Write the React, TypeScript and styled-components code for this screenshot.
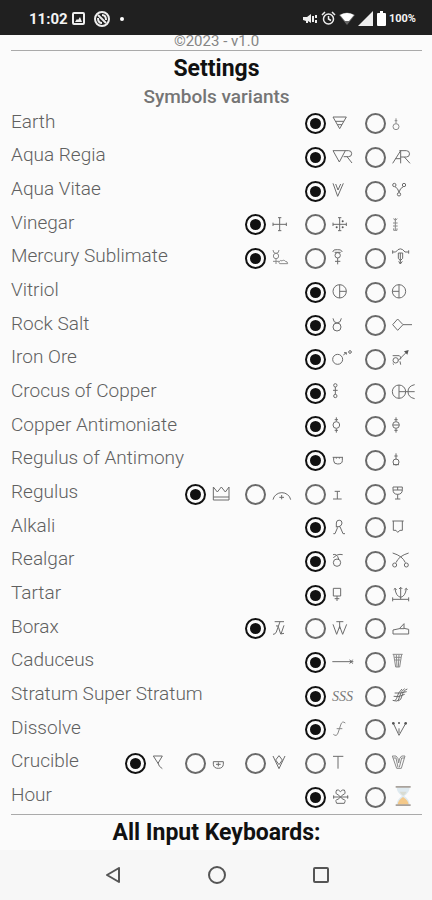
import React, { useState } from "react";
import styled, { createGlobalStyle, css } from "styled-components";

const GlobalStyle = createGlobalStyle`
  * { box-sizing: border-box; }
  body { margin: 0; background: #fbfbfb; font-family: Roboto, "Liberation Sans", sans-serif; }
  h1, h2, p { margin: 0; }
`;

const Screen = styled.div`
  display: flex;
  flex-direction: column;
  min-height: 100vh;
  background: #fbfbfb;
`;

const StatusBar = styled.header`
  display: flex;
  align-items: center;
  justify-content: space-between;
  height: 35px;
  padding: 2px 16px 0 29px;
  background: #202020;
  color: #f4f4f4;
`;

const StatusGroup = styled.div<{ $gap: number }>`
  display: flex;
  align-items: center;
  gap: ${(p) => p.$gap}px;
`;

const Clock = styled.span`
  font-size: 15px;
  font-weight: 700;
`;

const Battery = styled.span`
  font-size: 11px;
  font-weight: 700;
`;

const Content = styled.main`
  display: flex;
  flex: 1;
  flex-direction: column;
  padding: 0 10px 0 11px;
`;

const Version = styled.p`
  height: 15px;
  color: #858585;
  font-size: 15px;
  line-height: 12px;
  text-align: center;
`;

const Heading = styled.h1`
  border-top: 1px solid #aaa;
  color: #111;
  font-size: 23px;
  font-weight: 700;
  line-height: 35px;
  text-align: center;
`;

const Subheading = styled.h2`
  color: #757575;
  font-size: 19px;
  font-weight: 500;
  line-height: 21px;
  text-align: center;
`;

const Rows = styled.div`
  display: grid;
  flex: 1;
  grid-auto-rows: 1fr;
`;

const Row = styled.div`
  display: flex;
  align-items: center;
  justify-content: space-between;
`;

const RowName = styled.span`
  padding-bottom: 4px;
  color: #606060;
  font-size: 19px;
  font-weight: 300;
  line-height: 24px;
  white-space: nowrap;
`;

const Options = styled.div`
  display: flex;
  gap: 3px;
`;

const Option = styled.label`
  display: flex;
  align-items: center;
  gap: 6px;
  width: 57px;
  cursor: pointer;
`;

const Radio = styled.input`
  display: grid;
  flex: none;
  place-items: center;
  width: 21px;
  height: 21px;
  margin: 0;
  border: 2px solid #6a6a6a;
  border-radius: 50%;
  appearance: none;
  cursor: pointer;

  &:checked {
    border-color: #111;
  }

  &:checked::before {
    width: 11px;
    height: 11px;
    border-radius: 50%;
    background: #111;
    content: "";
  }
`;

const Glyph = styled.svg<{ $faint?: boolean }>`
  flex: none;
  width: 30px;
  height: 22px;
  overflow: visible;
  fill: none;
  stroke: #6c6c6c;
  stroke-width: 3;
  ${(p) =>
    p.$faint &&
    css`
      stroke: #8a8a8a;
    `}

  text {
    fill: #777;
    stroke: none;
    font: italic 42px "Liberation Serif", serif;
  }
`;

const NavBar = styled.nav`
  display: grid;
  grid-template-columns: repeat(3, 104px);
  justify-content: center;
  height: 50px;
  padding-left: 2px;
  background: #f7f7f7;
`;

const NavButton = styled.button`
  display: grid;
  place-items: center;
  padding: 0;
  border: 0;
  background: none;
  cursor: pointer;

  svg {
    fill: none;
    stroke: #555;
    stroke-width: 2;
  }
`;

type Symbol = { d?: string; dots?: number[][]; rings?: number[][]; faint?: boolean; extra?: React.ReactNode };
type Setting = { name: string; symbols: Symbol[] };

const hourglass = (
  <g stroke="none">
    <path d="M14 4H53Q53 19 37 30Q53 41 53 56H14Q14 41 30 30Q14 19 14 4Z" fill="#dfeaf0" />
    <path d="M23 17H44Q41 24 34 29Q26 24 23 17Z" fill="#d9dcd2" />
    <path d="M33 33Q49 43 50 56H17Q18 43 33 33Z" fill="#f4c98a" />
    <path d="M11 0H56V5H11ZM11 55H56V60H11Z" fill="#a9a29c" />
  </g>
);

const settings: Setting[] = [
  {
    name: "Earth",
    symbols: [
      { d: "M3 12H43L23 47ZM10 25H36M16 35H30" },
      { d: "M12 16V31M8 23H16", rings: [[12, 41, 9]], faint: true },
    ],
  },
  {
    name: "Aqua Regia",
    symbols: [
      { d: "M3 14H50A9 9 0 0 1 50 32H35M3 14L22 48L40 14M45 32L60 51" },
      { d: "M2 52L26 14V52M10 38H26M22 14H43A9 9 0 0 1 43 33H26M37 33L54 52" },
    ],
  },
  {
    name: "Aqua Vitae",
    symbols: [
      { d: "M3 10L17 49L34 10M11 12L18 30L26 12" },
      { d: "M9 20Q18 24 21 37Q24 24 34 20", rings: [[7, 15, 5], [36, 15, 5], [21, 43, 5]] },
    ],
  },
  {
    name: "Vinegar",
    symbols: [
      { d: "M3 31H43M23 11V50M3 26V36M43 26V36M18 11H28M18 50H28" },
      { d: "M3 31H43M23 11V50M3 26V36M43 26V36M18 11H28M18 50H28", dots: [[32, 22, 3], [32, 40, 3], [14, 40, 3]] },
      { d: "M10 12V48M4 14L10 19L16 14M3 27H17M3 36H17M5 43V49H15V43", faint: true },
    ],
  },
  {
    name: "Mercury Sublimate",
    symbols: [
      { d: "M3 9Q3 19 12 19Q21 19 21 9M12 35V51M3 43H21M23 50A5 5 0 0 1 30 42A6 6 0 0 1 40 43Q47 43 47 50Z", rings: [[12, 27, 8]], faint: true },
      { d: "M2 15Q4 6 16 8Q28 6 31 15M8 16H26M17 33V52M9 43H25", rings: [[17, 25, 8]] },
      { d: "M2 15H11Q25 -4 39 15H50M2 10V20M50 10V20M19 18H32V34L25 41L19 34ZM25 18V51M20 43L25 51L31 43" },
    ],
  },
  {
    name: "Vitriol",
    symbols: [
      { d: "M23 11V51M23 31H43", rings: [[23, 31, 20]] },
      { d: "M21 11V51M1 31H21", rings: [[21, 31, 20]] },
    ],
  },
  {
    name: "Rock Salt",
    symbols: [
      { d: "M3 10Q4 23 15 24Q27 23 28 10", rings: [[15, 36, 12]] },
      { d: "M2 29L17 12L33 29L17 46ZM33 29H60" },
    ],
  },
  {
    name: "Iron Ore",
    symbols: [
      { d: "M34 21L43 14M36 14H43V20", rings: [[17, 34, 15], [54, 12, 4]] },
      { d: "M18 38L44 12M2 23H22Q28 26 26 34M2 46L6 50M24 40L26 50", rings: [[11, 37, 8]], extra: <path d="M50 6L46 20L36 10Z" fill="#555" stroke="none" /> },
    ],
  },
  {
    name: "Crocus of Copper",
    symbols: [
      { d: "M10 15V37M3 25H17", rings: [[10, 10, 5], [10, 42, 5]] },
      { d: "M21 9V49M21 29H68M68 8Q48 12 48 29Q48 46 68 50", rings: [[21, 29, 20]] },
    ],
  },
  {
    name: "Copper Antimoniate",
    symbols: [
      { d: "M13 4V16M13 38V50M8 11H18M8 43H18", rings: [[13, 27, 10]] },
      { d: "M12 4V16M12 38V50M7 11H17M7 43H17M3 27H21", rings: [[12, 27, 10]] },
    ],
  },
  {
    name: "Regulus of Antimony",
    symbols: [
      { d: "M2 25H33M5 25V35Q5 45 17 45Q31 45 31 35V25M13 25V29M22 25V29" },
      { d: "M12 13V31M7 21H17M3 47H21", rings: [[12, 39, 9]] },
    ],
  },
  {
    name: "Regulus",
    symbols: [
      { d: "M4 12V51H51V12L40 27L28 12L16 27ZM4 42H51" },
      { d: "M3 50A27 26 0 0 1 56 50M29 36V49M22 43H36" },
      { d: "M8 25H24M16 25V48M3 48H29" },
      { d: "M3 12H31V20Q31 34 17 34Q3 34 3 20ZM17 34V48M9 48H25M3 21H31M17 12V21" },
    ],
  },
  {
    name: "Alkali",
    symbols: [
      { d: "M4 50H9L17 31M13 31V18A8 8 0 0 1 30 18Q30 26 21 29M13 29H24L33 50H39" },
      { d: "M1 12H35M4 12V40H12L17 46L24 40H31V12" },
    ],
  },
  {
    name: "Realgar",
    symbols: [
      { d: "M3 14Q15 10 20 27M4 24Q15 10 32 14", rings: [[15, 38, 11]] },
      { d: "M2 9Q32 18 40 38M50 9Q20 18 12 38", rings: [[8, 45, 6], [43, 45, 6]] },
    ],
  },
  {
    name: "Tartar",
    symbols: [
      { d: "M4 13H26V36H4ZM15 36V51M8 44H22" },
      { d: "M2 46H50M2 40V52M50 40V52M26 10V46M9 14Q12 37 26 40Q40 37 43 14M5 17L9 13L14 17M38 17L43 13L47 17M21 15L26 10L31 15" },
    ],
  },
  {
    name: "Borax",
    symbols: [
      { d: "M8 11H36M24 11L13 42Q9 50 3 49M12 24Q17 20 20 29L26 48L36 46M36 22L27 48" },
      { d: "M3 19L14 49L23 25L32 49L44 19M13 11H34M23 11V32" },
      { d: "M3 36L22 32L36 17V31L50 34V48H3ZM22 32H36" },
    ],
  },
  {
    name: "Caduceus",
    symbols: [
      { d: "M1 32H64M53 26L62 38M62 26L53 38" },
      { d: "M2 10H32M5 10L11 48H23L29 10M13 12L15 48M21 12L19 48M7 19H27M9 27H25", faint: true },
    ],
  },
  {
    name: "Stratum Super Stratum",
    symbols: [
      { extra: <text x="0" y="48">SSS</text> },
      { d: "M2 46Q10 52 14 40Q18 22 30 12M10 48Q20 50 22 36Q26 18 38 11M18 48Q28 46 30 32Q34 16 46 12M5 34Q20 38 38 28M8 24Q24 26 44 20" },
    ],
  },
  {
    name: "Dissolve",
    symbols: [
      { d: "M40 12Q30 4 26 18L18 42Q14 54 4 46M14 29H31", faint: true },
      { d: "M5 15L21 49L40 15M21 28V42", dots: [[4, 13, 4], [21, 12, 3], [41, 13, 4]] },
    ],
  },
  {
    name: "Crucible",
    symbols: [
      { d: "M4 12H31L18 34ZM17 30Q20 45 31 50" },
      { d: "M4 29H34V37Q33 49 19 49Q5 49 4 37ZM12 37H26M19 31V43" },
      { d: "M3 12L21 50L39 12M11 24L21 11L31 24L21 38Z" },
      { d: "M3 13H34M18 13V50" },
      { d: "M1 12H12Q20 17 20 33Q21 17 29 12H39L28 49H14ZM4 18H12L18 46M37 18H29L22 46", faint: true },
    ],
  },
  {
    name: "Hour",
    symbols: [
      { d: "M3 33H49M18 26L33 40M33 26L18 40M18 40Q8 40 14 52H37Q43 40 33 40M18 26Q8 24 14 12Q20 10 25 17Q31 10 37 12Q43 24 33 26M5 28V38M47 28V38" },
      { extra: hourglass },
    ],
  },
];

function SymbolGlyph({ symbol }: { symbol: Symbol }) {
  return (
    <Glyph viewBox="0 0 90 66" $faint={symbol.faint} aria-hidden="true">
      {symbol.d && <path d={symbol.d} />}
      {symbol.rings?.map(([x, y, r]) => <circle key={`${x}-${y}`} cx={x} cy={y} r={r} />)}
      {symbol.dots?.map(([x, y, r]) => <circle key={`${x}-${y}`} cx={x} cy={y} r={r} fill="#555" stroke="none" />)}
      {symbol.extra}
    </Glyph>
  );
}

function SettingRow({ setting }: { setting: Setting }) {
  const [selected, setSelected] = useState(0);
  const id = setting.name.replace(/ /g, "-").toLowerCase();
  return (
    <Row role="radiogroup" aria-labelledby={id}>
      <RowName id={id}>{setting.name}</RowName>
      <Options>
        {setting.symbols.map((symbol, i) => (
          <Option key={i}>
            <Radio
              type="radio"
              name={id}
              checked={selected === i}
              onChange={() => setSelected(i)}
              aria-label={`${setting.name} ${i + 1}`}
            />
            <SymbolGlyph symbol={symbol} />
          </Option>
        ))}
      </Options>
    </Row>
  );
}

export default function App() {
  return (
    <Screen>
      <GlobalStyle />
      <StatusBar>
        <StatusGroup $gap={4}>
          <Clock>11:02</Clock>
          <svg width="13" height="13" viewBox="0 0 13 13" fill="none" stroke="#eee" strokeWidth="2">
            <rect x="1" y="1" width="11" height="11" rx="1" />
            <path d="M3 10L5 7L6 8L8 5L10 10Z" fill="#eee" stroke="none" />
          </svg>
          <svg width="26" height="16" viewBox="0 0 26 16" fill="none" stroke="#eee" strokeWidth="2">
            <circle cx="13" cy="8" r="7" />
            <path d="M9 4L17 12" />
            <path d="M9 7Q9 12 13 12M13 4Q17 4 17 9" />
          </svg>
          <svg width="6" height="6" viewBox="0 0 6 6">
            <circle cx="3" cy="3" r="2" fill="#fff" />
          </svg>
        </StatusGroup>
        <StatusGroup $gap={3}>
          <svg width="15" height="12" viewBox="0 0 15 12" fill="#eee">
            <path d="M0 4L4 4L8 1V10L5 8V10H3V8L0 7ZM9 3H11V9H9ZM12 2H14V5H12ZM12 7H14V10H12Z" />
          </svg>
          <svg width="15" height="15" viewBox="0 0 30 30" fill="none" stroke="#eee" strokeWidth="3">
            <circle cx="15" cy="16" r="10" />
            <path d="M2 8L8 2M28 8L22 2M15 10V16L20 19" />
          </svg>
          <svg width="16" height="14" viewBox="0 0 16 14">
            <path d="M0 3Q8 -2 16 3L8 13Z" fill="#666" />
            <path d="M1 3Q8 -1 15 3L10 9H6Z" fill="#fff" />
          </svg>
          <svg width="16" height="15" viewBox="0 0 16 15">
            <path d="M0 15L15 0V15Z" fill="#eee" />
          </svg>
          <svg width="9" height="15" viewBox="0 0 9 15">
            <path d="M3 0H6V2H8Q9 2 9 3V14Q9 15 8 15H1Q0 15 0 14V3Q0 2 1 2H3Z" fill="#fff" />
          </svg>
          <Battery>100%</Battery>
        </StatusGroup>
      </StatusBar>
      <Content>
        <Version>©2023 - v1.0</Version>
        <Heading>Settings</Heading>
        <Subheading>Symbols variants</Subheading>
        <Rows>
          {settings.map((setting) => (
            <SettingRow key={setting.name} setting={setting} />
          ))}
        </Rows>
        <Heading as="h2">All Input Keyboards:</Heading>
      </Content>
      <NavBar aria-label="System">
        <NavButton type="button" aria-label="Back">
          <svg width="16" height="16" viewBox="0 0 16 16">
            <path d="M14 1V15L2 8Z" strokeLinejoin="round" />
          </svg>
        </NavButton>
        <NavButton type="button" aria-label="Home">
          <svg width="18" height="18" viewBox="0 0 18 18">
            <circle cx="9" cy="9" r="8" />
          </svg>
        </NavButton>
        <NavButton type="button" aria-label="Recent apps">
          <svg width="16" height="16" viewBox="0 0 16 16">
            <rect x="1" y="1" width="14" height="14" rx="1" />
          </svg>
        </NavButton>
      </NavBar>
    </Screen>
  );
}
